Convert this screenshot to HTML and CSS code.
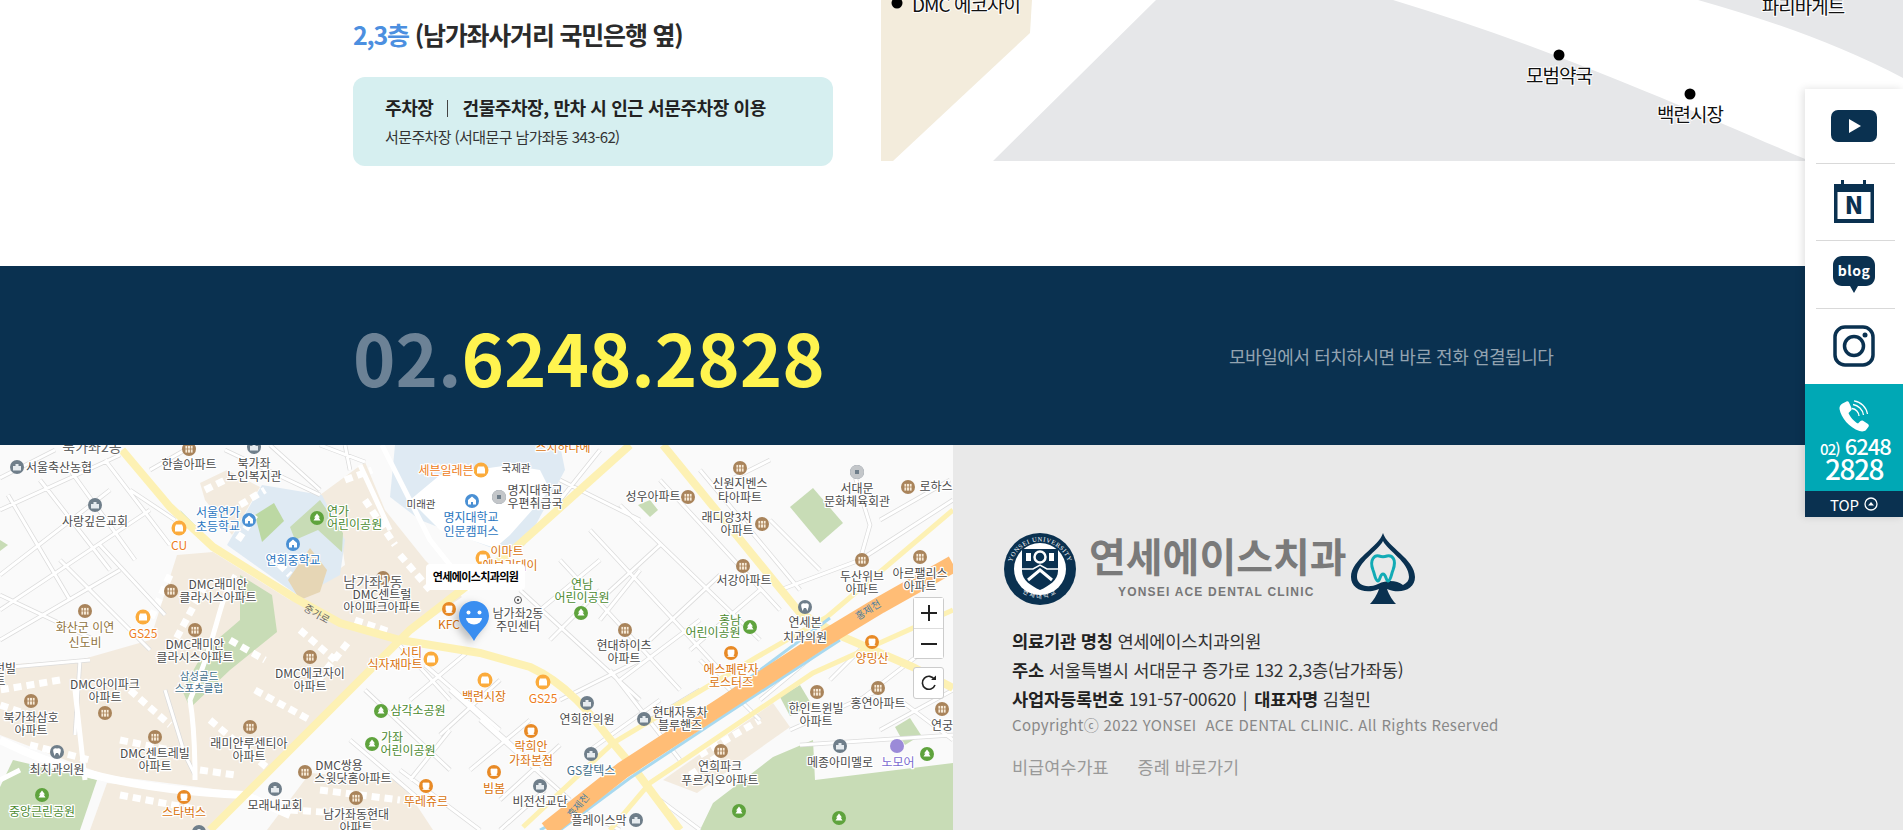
FILE: index.html
```html
<!DOCTYPE html>
<html lang="ko">
<head>
<meta charset="UTF-8">
<title>연세에이스치과</title>
<link rel="stylesheet" href="styles.css">
</head>
<body>
<div class="page">

	<!-- 오시는 길 -->
	<section class="location">
		<div class="location-info">
			<h3 class="floor"><span class="floor-num">2,3층</span> (남가좌사거리 국민은행 옆)</h3>
			<div class="parking">
				<p class="parking-title">주차장<i class="bar"></i>건물주차장, 만차 시 인근 서문주차장 이용</p>
				<p class="parking-sub">서문주차장 (서대문구 남가좌동 343-62)</p>
			</div>
		</div>
		<svg class="location-map" width="1022" height="161" viewBox="881 0 1022 161">
			<path class="lm-beige" d="M881 0H1032L1030 33L893 161H881Z"/>
			<path class="lm-grey" d="M1156 0H1393C1560 50 1700 115 1810 161H993Z"/>
			<path class="lm-grey" d="M1698 0H1903V78C1840 45 1770 20 1698 0Z"/>
			<circle class="lm-dot" cx="897" cy="3" r="5.5"/>
			<circle class="lm-dot" cx="1559" cy="55" r="5.5"/>
			<circle class="lm-dot" cx="1690" cy="94" r="5.5"/>
			<text class="lm-text" x="912" y="12">DMC 에코자이</text>
			<text class="lm-text lm-c" x="1559" y="83">모범약국</text>
			<text class="lm-text lm-c" x="1690" y="122">백련시장</text>
			<text class="lm-text lm-c" x="1803" y="14">파리바게트</text>
		</svg>
	</section>

	<!-- 전화 -->
	<section class="callband">
		<a class="call-num"><span class="call-area">02.</span>6248.2828</a>
		<span class="call-note">모바일에서 터치하시면 바로 전화 연결됩니다</span>
	</section>

	<section class="bottom">
		<div class="map">
			<svg class="map-svg" width="953" height="385" viewBox="0 445 953 385">
				<defs>
					<g id="apt"><circle r="7" fill="#a9845b"/><path d="M-4-3.5H4V4H-4Z M-1.5-3.5V4 M1.5-3.5V4 M-4 0H4" fill="#f6e9d6" stroke="#a9845b" stroke-width=".8"/></g>
					<g id="food"><circle r="7" fill="#e88a26"/><path d="M-3-3H3V.5A3 3 0 0 1-3 .5Z M-3.5 3.5H3.5" fill="#fff" stroke="#fff" stroke-width=".8"/></g>
					<g id="shop"><circle r="7.5" fill="#fbab3c"/><path d="M-4-1H4V3.5H-4Z M-3-3.5H3L4-1H-4Z" fill="#fff"/></g>
					<g id="park"><circle r="7" fill="#5fa33d"/><path d="M0-4.5L3-.5H1.6L3.5 2.5H-3.5L-1.6-.5H-3Z" fill="#fff"/></g>
					<g id="edu"><circle r="7" fill="#4a90d4"/><path d="M0-4.5L4-1V3.5H1V1H-1V3.5H-4V-1Z" fill="#fff"/></g>
					<g id="gov"><circle r="7" fill="#6f7e8a"/><path d="M-4 3.5V-1L-1.5-1V-3H1.5V-1L4-1V3.5Z" fill="#e6ebef"/></g>
					<g id="dent"><circle r="7" fill="#6f7e8a"/><path d="M-3.5-3C-2-4.5 0-3.5 0-3.5S2-4.5 3.5-3C4.5-1 3 1 2.5 4L1 1H-1L-2.5 4C-3 1-4.5-1-3.5-3Z" fill="#fff"/></g>
					<path id="alleys" d="M0 478L55 450M0 510L120 455M8 495L70 600M40 480L110 570M70 470L135 560M105 460L170 545M0 575L110 490M0 610L150 510M0 640L120 570M0 595L95 640M60 560L150 650M100 545L165 615M150 470L185 450M130 490L175 520M225 450L320 495M270 445L320 490M320 445L365 462M345 445L350 470M0 668L90 660M80 660L75 735M165 690L185 755L195 775M395 640L450 700M410 700L470 650M440 735L500 680M470 770L530 720M500 800L560 745M425 665L500 730M450 690L540 770M480 720L570 800M400 770L480 830M365 690L450 770M350 740L420 800M410 780L450 730M560 560L680 690M590 530L720 670M520 590L640 700M620 505L760 640M660 480L780 610M700 470L800 590M560 480L640 520M600 450L560 500M600 600L660 545M650 640L720 575M690 650L760 590M550 640L600 590M540 610L600 560M640 570L600 620M620 680L700 620M730 480L770 460M770 520L820 570M780 590L860 560L870 525L853 470M860 560L953 500M880 520L950 480M850 630L900 590M560 700L640 660M590 750L660 700M610 670L680 760M650 720L700 690M700 660L760 720M760 700L820 650M830 680L870 640M860 700L925 650M880 730L953 690M790 730L880 690M660 800L700 830M800 745L953 735M900 700L953 740M560 800L620 830M500 830L545 790"/>
				</defs>

				<rect class="m-base" x="0" y="445" width="953" height="385"/>

				<!-- 구역 -->
				<path class="m-beige" d="M177 555L213 552L290 600L400 645L245 793L105 775L0 735V665L80 660L150 640Z"/>
				<path class="m-beige" d="M320 495L365 462L385 510L425 560L462 597L400 640L340 620L300 597L345 565L340 530Z"/>
				<path class="m-beige" d="M200 483L227 470L260 487L232 535L205 500Z"/>
				<path class="m-beige" d="M107 783L243 797L210 830H90Z"/>
				<path class="m-beige" d="M310 773L400 780L433 830H267Z"/>
				<path class="m-beige" d="M663 780L773 703L790 727L697 793Z"/>
				<path class="m-edu" d="M227 545L262 485L322 495L345 540L340 575L300 597Z"/>
				<path class="m-edu" d="M395 445H560L565 470L525 545L510 555L420 520L390 497Z"/>
				<path class="m-white" d="M410 500L440 475L510 465L540 470L550 490L510 535L495 548L440 530Z"/>
				<path class="m-green" d="M290 527L320 500L343 533L342 552L318 530L295 540Z"/>
				<path class="m-green" d="M180 510L225 555L212 550L190 530Z"/>
				<path class="m-green" d="M240 575L272 595L277 632L230 670L190 708L182 690L205 650L240 620Z"/>
				<path class="m-green" d="M0 787L13 760L97 780L80 830H0Z"/>
				<path class="m-green" d="M713 803L773 757L813 740L815 780L953 763V830H700Z"/>
				<path class="m-green" d="M790 507L813 488L843 523L820 543Z"/>
				<path class="m-green" d="M638 505L650 500L658 510L650 517Z"/>
				<path class="m-green" d="M780 697L800 685L812 705L790 716Z"/>
				<path class="m-green" d="M895 727L910 718L921 735L905 745Z"/>
				<path class="m-green" d="M0 540L8 545L0 551Z"/>
				<path class="m-field" d="M255 515L274 503L284 521L262 542Z"/>
				<path class="m-school" d="M288 580L310 548L327 570L320 592L300 600Z"/>

				<!-- 건물 -->
				<path class="m-bldg" d="M205 490L225 480M345 480L372 470M365 500L395 545M400 555L430 590M355 620L390 632M170 575L150 620M205 585L170 650M230 640L265 660M300 630L335 660M310 690L350 640M255 690L310 720M60 680L0 690M45 720L0 705M130 690L170 725M120 740L170 750M200 770L235 775M210 720L270 770M320 790L400 800M290 810L370 815M700 755L760 720M690 775L720 755M30 745L90 760M120 795L200 810M240 505L265 490M238 540L255 515M270 555L290 575"/>

				<!-- 골목길 -->
				<use class="m-alley-edge" href="#alleys"/>
				<use class="m-alley-fill" href="#alleys"/>

				<!-- 큰길 -->
				<path class="m-road-w" d="M0 740C60 770 130 790 245 795L290 815"/>
				<path class="m-road-w thin" d="M382 445L430 540L470 590M360 465L390 530M235 575C215 610 220 630 190 700C195 730 195 760 195 780M75 690L85 780M0 780L20 770"/>
				<path class="m-road-y" d="M122 450L170 507L213 547L293 597L340 623L400 640L480 653L530 667C570 685 595 720 613 743L633 767L680 830"/>
				<path class="m-road-y" d="M630 445L513 550L410 630L243 797L210 830"/>
				<path class="m-road-y" d="M663 445L800 613L843 637L913 667L953 688"/>
				<path class="m-road-y thin" d="M953 510L827 617L757 657L613 743L523 827"/>
				<path class="m-road-y thin" d="M953 610L813 673L650 783L610 830"/>
				<path class="m-stream" d="M830 618L725 696L555 822L540 830M560 830L630 778L725 715L840 640"/>
				<path class="m-river" d="M953 564L880 605L827 637L720 707L623 770L547 830"/>

				<text class="m-road-t" transform="translate(315 617) rotate(30)">중가로</text>
				<text class="m-river-t" transform="translate(870 613) rotate(-32)">홍제천</text>
				<text class="m-river-t" transform="translate(581 808) rotate(-50)">홍제천</text>

				<!-- 아이콘 -->
				<use href="#gov" x="17" y="467"/><use href="#apt" x="189" y="449"/><use href="#gov" x="254" y="447"/>
				<use href="#gov" x="95" y="505"/><use href="#edu" x="249" y="520"/><use href="#shop" x="179" y="528"/>
				<use href="#park" x="317" y="518"/><use href="#shop" x="481" y="470"/><use href="#edu" x="472" y="501"/>
				<use href="#edu" x="293" y="544"/><use href="#apt" x="383" y="578"/><use href="#food" x="449" y="609"/>
				<use href="#apt" x="171" y="591"/><use href="#apt" x="85" y="611"/><use href="#shop" x="143" y="617"/>
				<use href="#gov" x="499" y="497"/><use href="#apt" x="688" y="497"/><use href="#apt" x="740" y="468"/>
				<use href="#apt" x="762" y="524"/><use href="#gov" x="857" y="472"/><use href="#apt" x="908" y="487"/>
				<use href="#shop" x="483" y="558"/><use href="#park" x="581" y="613"/><use href="#apt" x="743" y="566"/>
				<use href="#apt" x="862" y="560"/><use href="#apt" x="920" y="557"/><use href="#dent" x="805" y="607"/>
				<use href="#park" x="750" y="627"/><use href="#shop" x="431" y="659"/><use href="#shop" x="485" y="680"/>
				<use href="#shop" x="543" y="682"/><use href="#apt" x="625" y="630"/><use href="#food" x="731" y="653"/>
				<use href="#food" x="872" y="642"/><use href="#gov" x="587" y="703"/><use href="#gov" x="644" y="719"/>
				<use href="#food" x="531" y="731"/><use href="#gov" x="591" y="754"/><use href="#food" x="494" y="772"/>
				<use href="#gov" x="540" y="786"/><use href="#apt" x="721" y="751"/><use href="#apt" x="817" y="692"/>
				<use href="#apt" x="878" y="688"/><use href="#apt" x="942" y="709"/><use href="#gov" x="840" y="746"/>
				<circle cx="897" cy="746" r="7" fill="#9b8ad8"/><use href="#park" x="927" y="754"/><use href="#park" x="739" y="811"/>
				<use href="#park" x="839" y="818"/><use href="#gov" x="636" y="820"/><use href="#apt" x="195" y="630"/>
				<use href="#apt" x="310" y="657"/><use href="#apt" x="105" y="713"/><use href="#apt" x="31" y="701"/>
				<use href="#park" x="381" y="711"/><use href="#apt" x="250" y="727"/><use href="#apt" x="155" y="737"/>
				<use href="#park" x="372" y="744"/><use href="#apt" x="305" y="772"/><use href="#dent" x="57" y="752"/>
				<use href="#park" x="42" y="795"/><use href="#food" x="184" y="797"/><use href="#gov" x="275" y="789"/>
				<use href="#food" x="426" y="786"/><use href="#apt" x="356" y="798"/><use href="#gov" x="199" y="832"/>
				<circle class="m-target" cx="518" cy="600" r="3.5"/><circle cx="518" cy="600" r="1.2" fill="#555"/>
				<circle cx="499" cy="497" r="7" fill="#c3c6c9"/><rect x="497" y="495" width="4" height="4" fill="#6f7e8a"/>
				<circle cx="857" cy="472" r="7" fill="#c3c6c9"/><rect x="855" y="470" width="4" height="4" fill="#6f7e8a"/>

				<!-- 이름 -->
				<g class="m-labels">
					<text class="big" x="92" y="452">북가좌2동</text>
					<text x="59" y="472">서울축산농협</text>
					<text x="189" y="469">한솔아파트</text>
					<text x="254" y="468">북가좌</text><text x="254" y="481">노인복지관</text>
					<text x="95" y="526">사랑깊은교회</text>
					<text class="edu" x="218" y="517">서울연가</text><text class="edu" x="218" y="531">초등학교</text>
					<text class="shop" x="179" y="550">CU</text>
					<text class="park s" x="327" y="516">연가</text><text class="park s" x="327" y="529">어린이공원</text>
					<text class="shop" x="446" y="475">세븐일레븐</text>
					<text class="sm" x="421" y="508">미래관</text>
					<text class="edu" x="471" y="522">명지대학교</text><text class="edu" x="471" y="536">인문캠퍼스</text>
					<text class="edu" x="293" y="565">연희중학교</text>
					<text class="big" x="373" y="587">남가좌1동</text>
					<text x="382" y="599">DMC센트럴</text><text x="382" y="612">아이파크아파트</text>
					<text class="food" x="449" y="629">KFC</text>
					<text x="218" y="589">DMC래미안</text><text x="218" y="602">클라시스아파트</text>
					<text class="olive" x="85" y="632">화산군 이연</text><text class="olive" x="85" y="647">신도비</text>
					<text class="shop" x="143" y="638">GS25</text>
					<text class="food" x="563" y="452">스치하나에</text>
					<text class="sm" x="516" y="472">국제관</text>
					<text x="535" y="495">명지대학교</text><text x="535" y="508">우편취급국</text>
					<text x="653" y="501">성우아파트</text>
					<text x="740" y="488">신원지벤스</text><text x="740" y="502">타아파트</text>
					<text x="727" y="522">래디앙3차</text><text x="737" y="535">아파트</text>
					<text x="857" y="493">서대문</text><text x="857" y="506">문화체육회관</text>
					<text x="936" y="491">로하스</text>
					<text class="food" x="507" y="556">이마트</text><text class="food" x="510" y="570">에브리데이</text>
					<text class="park" x="582" y="589">연남</text><text class="park" x="582" y="602">어린이공원</text>
					<text x="744" y="585">서강아파트</text>
					<text x="862" y="581">두산위브</text><text x="862" y="594">아파트</text>
					<text x="920" y="578">아르팰리스</text><text x="920" y="591">아파트</text>
					<text x="518" y="618">남가좌2동</text><text x="518" y="631">주민센터</text>
					<text x="805" y="627">연세본</text><text x="805" y="642">치과의원</text>
					<text class="park" x="730" y="625">홍남</text><text class="park" x="713" y="637">어린이공원</text>
					<text class="food" x="411" y="657">시티</text><text class="food" x="395" y="669">식자재마트</text>
					<text class="food" x="484" y="701">백련시장</text>
					<text class="shop" x="543" y="703">GS25</text>
					<text x="624" y="650">현대하이츠</text><text x="624" y="663">아파트</text>
					<text class="food" x="731" y="674">에스페란자</text><text class="food" x="731" y="687">로스터즈</text>
					<text class="food" x="872" y="663">양밍산</text>
					<text x="587" y="724">연희한의원</text>
					<text x="680" y="717">현대자동차</text><text x="680" y="730">블루핸즈</text>
					<text class="food" x="531" y="751">락희안</text><text class="food" x="531" y="765">가좌본점</text>
					<text class="slate" x="591" y="775">GS칼텍스</text>
					<text class="food" x="494" y="793">빔봄</text>
					<text x="540" y="806">비전선교단</text>
					<text x="720" y="771">연희파크</text><text x="720" y="785">푸르지오아파트</text>
					<text x="816" y="713">한인트윈빌</text><text x="816" y="726">아파트</text>
					<text x="878" y="708">홍연아파트</text>
					<text x="942" y="730">연궁</text>
					<text x="840" y="767">메종아미멜로</text>
					<text class="purple" x="898" y="767">노모어</text>
					<text x="599" y="825">플레이스막</text>
					<text class="sm slate" x="199" y="680">삼성골드</text><text class="sm slate" x="199" y="692">스포츠클럽</text>
					<text x="195" y="649">DMC래미안</text><text x="195" y="662">클라시스아파트</text>
					<text x="310" y="678">DMC에코자이</text><text x="310" y="691">아파트</text>
					<text x="105" y="689">DMC아이파크</text><text x="105" y="702">아파트</text>
					<text x="5" y="673">던빌</text><text x="0" y="686">트</text>
					<text x="31" y="722">북가좌삼호</text><text x="31" y="735">아파트</text>
					<text class="park" x="418" y="715">삼각소공원</text>
					<text x="249" y="748">래미안루센티아</text><text x="249" y="761">아파트</text>
					<text x="155" y="758">DMC센트레빌</text><text x="155" y="771">아파트</text>
					<text class="park" x="392" y="742">가좌</text><text class="park" x="408" y="755">어린이공원</text>
					<text x="339" y="770">DMC쌍용</text><text x="353" y="783">스윗닷홈아파트</text>
					<text x="57" y="774">최치과의원</text>
					<text class="park" x="42" y="816">중앙근린공원</text>
					<text class="food" x="184" y="817">스타벅스</text>
					<text x="275" y="810">모래내교회</text>
					<text class="food" x="426" y="806">뚜레쥬르</text>
					<text x="356" y="819">남가좌동현대</text><text x="356" y="832">아파트</text>
				</g>
			</svg>

			<div class="map-tag">연세에이스치과의원</div>

			<svg class="map-pin" width="32" height="42" viewBox="0 0 32 42">
				<path d="M16 1C7.5 1 1 7.5 1 16C1 26 11 31 16 41C21 31 31 26 31 16C31 7.5 24.5 1 16 1Z" fill="#3a8ef0"/>
				<circle cx="10.5" cy="12.5" r="2" fill="#fff"/><circle cx="21.5" cy="12.5" r="2" fill="#fff"/>
				<path d="M8 18H24A8 6.5 0 0 1 8 18Z" fill="#fff"/>
			</svg>

			<div class="map-ctrl">
				<div class="zoom-box">
					<button class="ctrl-btn"><svg width="16" height="16" viewBox="0 0 16 16"><path d="M0 8H16M8 0V16" stroke="#222" stroke-width="2"/></svg></button>
					<button class="ctrl-btn"><svg width="16" height="16" viewBox="0 0 16 16"><path d="M0 8H16" stroke="#222" stroke-width="2"/></svg></button>
				</div>
				<button class="ctrl-btn ctrl-solo"><svg width="16" height="16" viewBox="0 0 16 16"><path d="M13.5 4.5A6.5 6.5 0 1 0 14 10" fill="none" stroke="#222" stroke-width="1.6"/><path d="M10 5H15V0.5Z" fill="#222"/></svg></button>
			</div>
		</div>

		<div class="info">
			<div class="logo">
				<svg class="seal" width="72" height="72" viewBox="0 0 72 72">
					<defs><path id="sealTop" d="M6.500 38A29.500 29.500 0 1 1 65.500 38"/><path id="sealBot" d="M8 46A30 30 0 0 0 64 46"/></defs>
					<circle cx="36" cy="36" r="36" fill="#0a3150"/>
					<circle cx="36" cy="36" r="26" fill="#fff"/>
					<text class="seal-top"><textPath href="#sealTop" startOffset="50%">YONSEI UNIVERSITY</textPath></text>
					<text class="seal-bot"><textPath href="#sealBot" startOffset="50%">연세대학교</textPath></text>
					<path d="M18 16H54V38C54 47 45 53 36 57C27 53 18 47 18 38Z" fill="#0a3150"/>
					<circle cx="36" cy="24" r="5.500" fill="none" stroke="#fff" stroke-width="2.500"/>
					<path d="M18 36H29L36 32L43 36H54" fill="none" stroke="#fff" stroke-width="1.500"/>
					<path d="M24 47L36 37L48 47" fill="none" stroke="#fff" stroke-width="3"/>
					<path d="M22 20H27V28H22ZM45 20H50V28H45Z" fill="#fff"/>
				</svg>
				<div class="logo-text">
					<strong class="logo-ko">연세에이스치과</strong>
					<span class="logo-en">YONSEI ACE DENTAL CLINIC</span>
				</div>
				<svg class="spade" width="64" height="72" viewBox="0 0 64 72">
					<path d="M32 0C28 14 0 26 0 44C0 56 14 62 28 56C26 62 22 68 19 71H45C42 68 38 62 36 56C50 62 64 56 64 44C64 26 36 14 32 0Z" fill="#0a3150"/>
					<path d="M32 8C27 18 6 29 6 44C6 52 16 56 27 51C38 46 46 48 52 52C56 50 58 47 58 44C58 29 37 18 32 8Z" fill="#e9e9e9"/>
					<path d="M22 37C18 26 24 22 28 23C31 24 33 24 36 23C41 22 46 26 42 37C40 42 40 47 37 48C35 48 35 41 32 41C29 41 29 48 27 48C24 47 24 42 22 37Z" fill="none" stroke="#12abb5" stroke-width="3"/>
				</svg>
			</div>
			<ul class="info-list">
				<li><b>의료기관 명칭</b> 연세에이스치과의원</li>
				<li><b>주소</b> 서울특별시 서대문구 증가로 132 2,3층(남가좌동)</li>
				<li><b>사업자등록번호</b> 191-57-00620 <i class="sep">|</i> <b>대표자명</b> 김철민</li>
			</ul>
			<p class="copy">Copyrightⓒ 2022 YONSEI &nbsp;ACE DENTAL CLINIC. All Rights Reserved</p>
			<div class="info-links"><a>비급여수가표</a><a>증례 바로가기</a></div>
		</div>
	</section>

	<!-- 퀵메뉴 -->
	<aside class="quick">
		<a class="quick-item q-you">
			<svg width="46" height="32" viewBox="0 0 46 32"><rect width="46" height="32" rx="7" fill="#0a3150"/><path d="M18 9L30 16L18 23Z" fill="#fff"/></svg>
		</a>
		<a class="quick-item q-cal">
			<svg width="40" height="43" viewBox="0 0 40 43"><path d="M0 4H7V0H10V4H29V0H32V4H40V43H0Z" fill="#0a3150"/><rect x="3.500" y="12" width="33" height="27" fill="#fff"/><text class="cal-n" x="20" y="34">N</text></svg>
		</a>
		<a class="quick-item q-blog">
			<svg width="42" height="37" viewBox="0 0 42 37"><path d="M9 0H33C38 0 42 4 42 9V21C42 26 38 30 33 30H25L21 37L17 30H9C4 30 0 26 0 21V9C0 4 4 0 9 0Z" fill="#0a3150"/><text class="blog-t" x="21" y="20">blog</text></svg>
		</a>
		<a class="quick-item q-insta">
			<svg width="42" height="42" viewBox="0 0 42 42"><rect x="2" y="2" width="38" height="38" rx="10" fill="none" stroke="#0a3150" stroke-width="3.5"/><circle cx="21" cy="21" r="9.5" fill="none" stroke="#0a3150" stroke-width="3.5"/><circle cx="32" cy="10" r="2.5" fill="#0a3150"/></svg>
		</a>
		<a class="quick-call">
			<svg class="call-ic" width="34" height="32" viewBox="0 0 34 32">
				<path d="M5.5 3.5L9.5 1.5C10.500 1 11.500 1.500 12 2.500L14.500 8C15 9 14.500 10 14 10.500L11.500 13C13 17 17 21.500 21 23.500L23.500 21C24.300 20.300 25.300 20.300 26 20.800L31 24C32 24.800 32 25.800 31.500 26.800L29 30C27.500 31.500 25 31.800 22.500 31C12 27.500 4 17.500 2.500 9C2.200 6.500 3.500 4.500 5.500 3.500Z" fill="#fff"/>
				<path d="M15 8.500A8 8 0 0 1 22 16M16 4.500A12.500 12.500 0 0 1 26.500 15M17 .8A16 16 0 0 1 30.500 14" fill="none" stroke="#fff" stroke-width="1.300"/>
			</svg>
			<span class="qc-line"><small>02)</small> 6248</span>
			<span class="qc-line2">2828</span>
		</a>
		<a class="quick-top">TOP <svg width="14" height="14" viewBox="0 0 14 14"><circle cx="7" cy="7" r="6" fill="none" stroke="#fff" stroke-width="1.300"/><path d="M4 8.500L7 5L10 8.500Z" fill="#fff"/></svg></a>
	</aside>
</div>
</body>
</html>
```

FILE: styles.css
```css
* {
	box-sizing: border-box;
}
html, body {
	margin: 0;
	padding: 0;
	overflow: hidden;
}
body {
	font-family: "Noto Sans CJK KR", "Noto Sans", sans-serif;
	color: #222;
}
.page {
	position: relative;
	width: 1903px;
	height: 830px;
	overflow: hidden;
	background: #fff;
}

/* location */
.location {
	display: flex;
	height: 266px;
}
.location-info {
	width: 881px;
	padding-left: 353px;
}
.floor {
	margin: 15px 0 0;
	font-size: 25px;
	line-height: 38px;
	font-weight: 700;
	letter-spacing: -1.2px;
	color: #2b2b2b;
}
.floor-num {
	color: #4c8fe0;
}
.parking {
	width: 480px;
	height: 89px;
	margin-top: 24px;
	padding: 16px 0 0 32px;
	background: #d6eff0;
	border-radius: 12px;
}
.parking p {
	margin: 0;
}
.parking-title {
	font-size: 18px;
	line-height: 28px;
	font-weight: 700;
	letter-spacing: -0.4px;
	color: #222;
}
.bar {
	display: inline-block;
	width: 1px;
	height: 17px;
	margin: 0 14px;
	background: #444;
	vertical-align: -2px;
}
.parking-sub {
	margin-top: 5px !important;
	font-size: 15px;
	line-height: 22px;
	letter-spacing: -0.6px;
	color: #333;
}
.location-map {
	display: block;
	flex: none;
}
.lm-beige { fill: #f3ecdc; }
.lm-grey { fill: #e6e7e9; }
.lm-dot { fill: #000; }
.lm-text {
	font-size: 19px;
	letter-spacing: -1px;
	fill: #111;
	paint-order: stroke;
	stroke: #fff;
	stroke-width: 2px;
}
.lm-c { text-anchor: middle; }

/* call band */
.callband {
	display: flex;
	align-items: center;
	height: 179px;
	padding-left: 353px;
	background: #0a3150;
}
.call-num {
	width: 876px;
	font-size: 72px;
	font-weight: 700;
	line-height: 1;
	color: #fff44f;
}
.call-area {
	color: #6c8296;
}
.call-note {
	font-size: 18px;
	letter-spacing: -0.45px;
	color: #93a3b0;
}

/* bottom */
.bottom {
	display: flex;
	height: 385px;
}
.map {
	position: relative;
	width: 953px;
	flex: none;
	overflow: hidden;
}
.map-svg {
	display: block;
}
.m-base { fill: #fafafa; }
.m-beige { fill: #f3ebdf; }
.m-edu { fill: #dfeaf3; }
.m-white { fill: #fff; }
.m-green { fill: #c8dcb6; }
.m-field { fill: #bcd8a3; }
.m-school { fill: #e6d6b5; }
.m-bldg {
	fill: none;
	stroke: #fff;
	stroke-width: 7;
	stroke-dasharray: 8 5;
}
.m-alley-edge {
	fill: none;
	stroke: #dcdcdc;
	stroke-width: 4.5;
}
.m-alley-fill {
	fill: none;
	stroke: #fff;
	stroke-width: 3;
}
.m-road-w {
	fill: none;
	stroke: #fff;
	stroke-width: 8;
}
.m-road-w.thin { stroke-width: 5; }
.m-road-y {
	fill: none;
	stroke: #fdf1b4;
	stroke-width: 8;
}
.m-road-y.thin { stroke-width: 5; }
.m-stream {
	fill: none;
	stroke: #a8d9ef;
	stroke-width: 3;
}
.m-river {
	fill: none;
	stroke: #ffbd76;
	stroke-width: 17;
}
.m-road-t, .m-river-t {
	font-size: 10px;
	text-anchor: middle;
}
.m-road-t { fill: #666; }
.m-river-t { fill: #4d7fa0; }
.m-target {
	fill: #fff;
	stroke: #555;
	stroke-width: 1;
}
.m-labels text {
	font-size: 12px;
	text-anchor: middle;
	fill: #4b4b4b;
	paint-order: stroke;
	stroke: #fff;
	stroke-width: 2.5px;
	stroke-linejoin: round;
}
.m-labels .big { font-size: 14px; fill: #666; }
.m-labels .sm { font-size: 10.500px; }
.m-labels .edu { fill: #2b76c0; }
.m-labels .shop { fill: #ee7d1c; }
.m-labels .food { fill: #d9730e; }
.m-labels .park { fill: #4b8a30; }
.m-labels .park.s { text-anchor: start; }
.m-labels .olive { fill: #8f7340; }
.m-labels .slate { fill: #3f6e8a; }
.m-labels .purple { fill: #7a6ad0; }
.map-tag {
	position: absolute;
	left: 426px;
	top: 119px;
	width: 99px;
	height: 26px;
	font-size: 11px;
	font-weight: 700;
	line-height: 25px;
	text-align: center;
	letter-spacing: -0.6px;
	color: #000;
	background: #fff;
	border-radius: 4px;
}
.map-pin {
	position: absolute;
	left: 458px;
	top: 155px;
	filter: drop-shadow(-4px 3px 4px rgba(0, 0, 0, 0.25));
}
.map-ctrl {
	position: absolute;
	left: 913px;
	top: 152px;
	display: flex;
	flex-direction: column;
	gap: 8px;
}
.zoom-box {
	display: flex;
	flex-direction: column;
	width: 31px;
	background: #fff;
	border: 1px solid #ccc;
	border-radius: 3px;
}
.ctrl-btn {
	display: flex;
	align-items: center;
	justify-content: center;
	width: 29px;
	height: 30px;
	padding: 0;
	background: #fff;
	border: 0;
}
.ctrl-btn + .ctrl-btn {
	border-top: 1px solid #ddd;
}
.ctrl-solo {
	width: 31px;
	height: 32px;
	border: 1px solid #ccc;
	border-radius: 3px;
}

/* footer info */
.info {
	flex: 1;
	padding: 88px 0 0 51px;
	background: #e9e9e9;
}
.logo {
	display: flex;
	align-items: flex-start;
	height: 72px;
}
.seal {
	flex: none;
}
.seal-top {
	font-family: "Liberation Serif", serif;
	font-size: 6.500px;
	letter-spacing: .6px;
	text-anchor: middle;
	fill: #fff;
}
.seal-bot {
	font-size: 6px;
	letter-spacing: 2px;
	text-anchor: middle;
	fill: #fff;
}
.logo-text {
	display: flex;
	flex-direction: column;
	width: 262px;
	margin-left: 13px;
}
.logo-ko {
	font-size: 40px;
	line-height: 46px;
	font-weight: 700;
	white-space: nowrap;
	color: #7a7a7a;
	margin-top: -1px;
}
.logo-en {
	margin: 7px 0 0 29px;
	font-family: "Liberation Sans", sans-serif;
	font-size: 12px;
	font-weight: 700;
	letter-spacing: 1.200px;
	white-space: nowrap;
	color: #777;
}
.spade {
	flex: none;
}
.info-list {
	margin: 21px 0 0 8px;
	padding: 0;
	list-style: none;
	font-size: 17.600px;
	line-height: 29px;
	letter-spacing: -0.2px;
	color: #333;
}
.info-list b {
	color: #222;
}
.sep {
	font-style: normal;
	margin: 0 2px;
}
.copy {
	margin: 0 0 0 8px;
	font-size: 15px;
	line-height: 24px;
	letter-spacing: .32px;
	color: #888;
}
.info-links {
	display: flex;
	gap: 29px;
	margin: 18px 0 0 8px;
	font-size: 17.500px;
	line-height: 24px;
	color: #999;
}

/* quick menu */
.quick {
	position: absolute;
	left: 1805px;
	top: 89px;
	width: 98px;
	box-shadow: -2px 0 8px rgba(0, 0, 0, 0.12);
}
.quick-item {
	display: flex;
	align-items: center;
	justify-content: center;
	background: #fff;
	position: relative;
}
.quick-item + .quick-item::before {
	content: "";
	position: absolute;
	top: 0;
	left: 11px;
	right: 8px;
	border-top: 1px solid #d9d9d9;
}
.q-you { height: 74px; padding-top: 0; }
.q-cal { height: 77px; }
.q-blog { height: 68px; }
.q-insta { height: 76px; }
.cal-n {
	font-size: 24px;
	font-weight: 900;
	text-anchor: middle;
	fill: #0a3150;
}
.blog-t {
	font-size: 14px;
	font-weight: 700;
	letter-spacing: .5px;
	text-anchor: middle;
	fill: #fff;
}
.quick-call {
	display: flex;
	flex-direction: column;
	align-items: center;
	height: 107px;
	padding-top: 16px;
	color: #fff;
	background: #00a8b5;
}
.call-ic {
	flex: none;
}
.qc-line {
	margin-top: 2px;
	padding-left: 3px;
	font-size: 22px;
	font-weight: 500;
	line-height: 22px;
	letter-spacing: -1px;
}
.qc-line small {
	font-size: 15px;
}
.qc-line2 {
	margin-top: -3px;
	font-size: 28px;
	font-weight: 500;
	line-height: 22px;
	letter-spacing: -1.500px;
}
.quick-top {
	display: flex;
	align-items: center;
	justify-content: center;
	gap: 5px;
	height: 26px;
	font-size: 15px;
	color: #fff;
	background: #0a3150;
}
```
